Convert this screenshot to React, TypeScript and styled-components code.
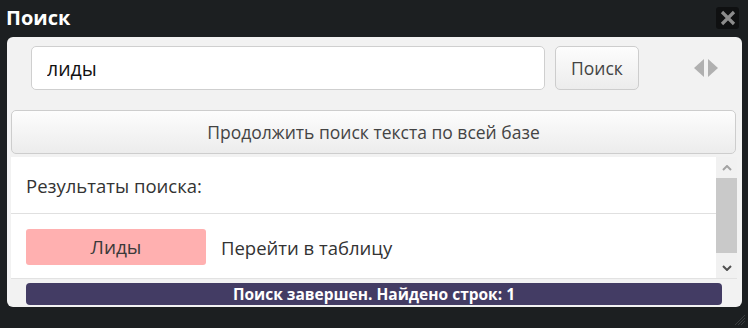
import React from 'react';
import styled, { createGlobalStyle } from 'styled-components';

const GlobalStyle = createGlobalStyle`
  html, body {
    margin: 0;
    padding: 0;
    background: #1c1f21;
  }
  body {
    font-family: "Open Sans", "Noto Sans", sans-serif;
    color: #333;
  }
`;

const Window = styled.div`
  width: 748px;
  height: 328px;
  box-sizing: border-box;
  background: #1c1f21;
  position: relative;
  overflow: hidden;
`;

const TitleBar = styled.div`
  height: 37px;
  display: flex;
  align-items: center;
  justify-content: space-between;
  padding: 0 9px 0 6px;
  box-sizing: border-box;
`;

const Title = styled.div`
  color: #fff;
  font-weight: 700;
  font-size: 20px;
  margin-top: -2px;
`;

const CloseButton = styled.div`
  width: 23px;
  height: 22px;
  background: #0f1011;
  border-radius: 3px;
  display: flex;
  align-items: center;
  justify-content: center;
  margin-top: -2px;
`;

const Panel = styled.div`
  margin: 0 6px 0 7px;
  height: 270px;
  background: #f2f2f2;
  border-radius: 6px;
  overflow: hidden;
  display: flex;
  flex-direction: column;
`;

const SearchRow = styled.div`
  display: flex;
  align-items: center;
  padding: 9px 0 0 24px;
`;

const SearchInput = styled.input`
  width: 514px;
  height: 44px;
  box-sizing: border-box;
  border: 1px solid #cfcfcf;
  border-radius: 5px;
  background: #fff;
  padding: 0 15px;
  font: inherit;
  font-size: 19.5px;
  color: #111;
  outline: none;
`;

const Button = styled.button<{ wide?: boolean }>`
  height: 44px;
  box-sizing: border-box;
  border: 1px solid #cdcdcd;
  border-radius: 5px;
  background: linear-gradient(#fdfdfd, #ececec);
  font: inherit;
  font-size: 17.5px;
  color: #444;
  padding: 0;
  cursor: pointer;
  width: ${({ wide }) => (wide ? '725px' : '84px')};
`;

const SearchButton = styled(Button)`
  margin-left: 10px;
`;

const Arrows = styled.div`
  margin-left: 55px;
  display: flex;
  gap: 4px;
  align-items: center;
`;

const ContinueButton = styled(Button)`
  margin: 20px 0 0 4px;
`;

const Results = styled.div`
  margin: 3px 0 0 4px;
  width: 726px;
  height: 122px;
  display: flex;
  background: #fff;
  border-bottom: 1px solid #e2e2e2;
  box-sizing: border-box;
`;

const ResultsBody = styled.div`
  flex: 1;
  overflow: hidden;
  font-size: 18.5px;
`;

const ResultsHeader = styled.div`
  height: 57px;
  display: flex;
  align-items: center;
  padding-left: 15px;
  border-bottom: 1px solid #e0e0e0;
  box-sizing: border-box;
`;

const ResultRow = styled.div`
  display: flex;
  align-items: center;
  padding: 15px 0 0 15px;
  gap: 15px;
`;

const Tag = styled.div`
  width: 180px;
  height: 36px;
  border-radius: 3px;
  background: #ffb0b0;
  display: flex;
  align-items: center;
  justify-content: center;
  color: #3a3a3a;
  font-size: 19px;
`;

const Scrollbar = styled.div`
  width: 21px;
  background: #f1f1f1;
  display: flex;
  flex-direction: column;
  align-items: stretch;
`;

const ScrollArrow = styled.div`
  height: 21px;
  display: flex;
  align-items: center;
  justify-content: center;
`;

const Thumb = styled.div`
  height: 75px;
  background: #c9c9c9;
`;

const Spacer = styled.div`
  flex: 1;
`;

const StatusBar = styled.div`
  margin: 4px 0 0 19px;
  width: 696px;
  height: 22px;
  border-radius: 4px;
  background: #433c64;
  color: #fff;
  font-weight: 700;
  font-size: 15.5px;
  display: flex;
  align-items: center;
  justify-content: center;
  flex-shrink: 0;
`;

const Grip = styled.svg`
  position: absolute;
  right: 2px;
  bottom: 2px;
`;

const App: React.FC = () => (
  <Window>
    <GlobalStyle />
    <TitleBar>
      <Title>Поиск</Title>
      <CloseButton>
        <svg width="16" height="16" viewBox="0 0 16 16">
          <path d="M2 2L14 14M14 2L2 14" stroke="#8c8c8c" strokeWidth="3.2" />
        </svg>
      </CloseButton>
    </TitleBar>
    <Panel>
      <SearchRow>
        <SearchInput defaultValue="лиды" />
        <SearchButton>Поиск</SearchButton>
        <Arrows>
          <svg width="10" height="18" viewBox="0 0 10 18">
            <path d="M10 0L0 9L10 18Z" fill="#b0b0b0" />
          </svg>
          <svg width="10" height="18" viewBox="0 0 10 18">
            <path d="M0 0L10 9L0 18Z" fill="#b0b0b0" />
          </svg>
        </Arrows>
      </SearchRow>
      <ContinueButton wide>Продолжить поиск текста по всей базе</ContinueButton>
      <Results>
        <ResultsBody>
          <ResultsHeader>Результаты поиска:</ResultsHeader>
          <ResultRow>
            <Tag>Лиды</Tag>
            <span>Перейти в таблицу</span>
          </ResultRow>
        </ResultsBody>
        <Scrollbar>
          <ScrollArrow>
            <svg width="10" height="6" viewBox="0 0 10 6">
              <path d="M1 5L5 1L9 5" stroke="#a3a3a3" strokeWidth="2" fill="none" />
            </svg>
          </ScrollArrow>
          <Thumb />
          <Spacer />
          <ScrollArrow>
            <svg width="10" height="6" viewBox="0 0 10 6">
              <path d="M1 1L5 5L9 1" stroke="#505050" strokeWidth="2" fill="none" />
            </svg>
          </ScrollArrow>
        </Scrollbar>
      </Results>
      <StatusBar>Поиск завершен. Найдено строк: 1</StatusBar>
    </Panel>
    <Grip width="12" height="12" viewBox="0 0 12 12">
      <path d="M11 1L1 11M11 4L4 11M11 7L7 11" stroke="#3a3d40" strokeWidth="1" />
    </Grip>
  </Window>
);

export default App;
